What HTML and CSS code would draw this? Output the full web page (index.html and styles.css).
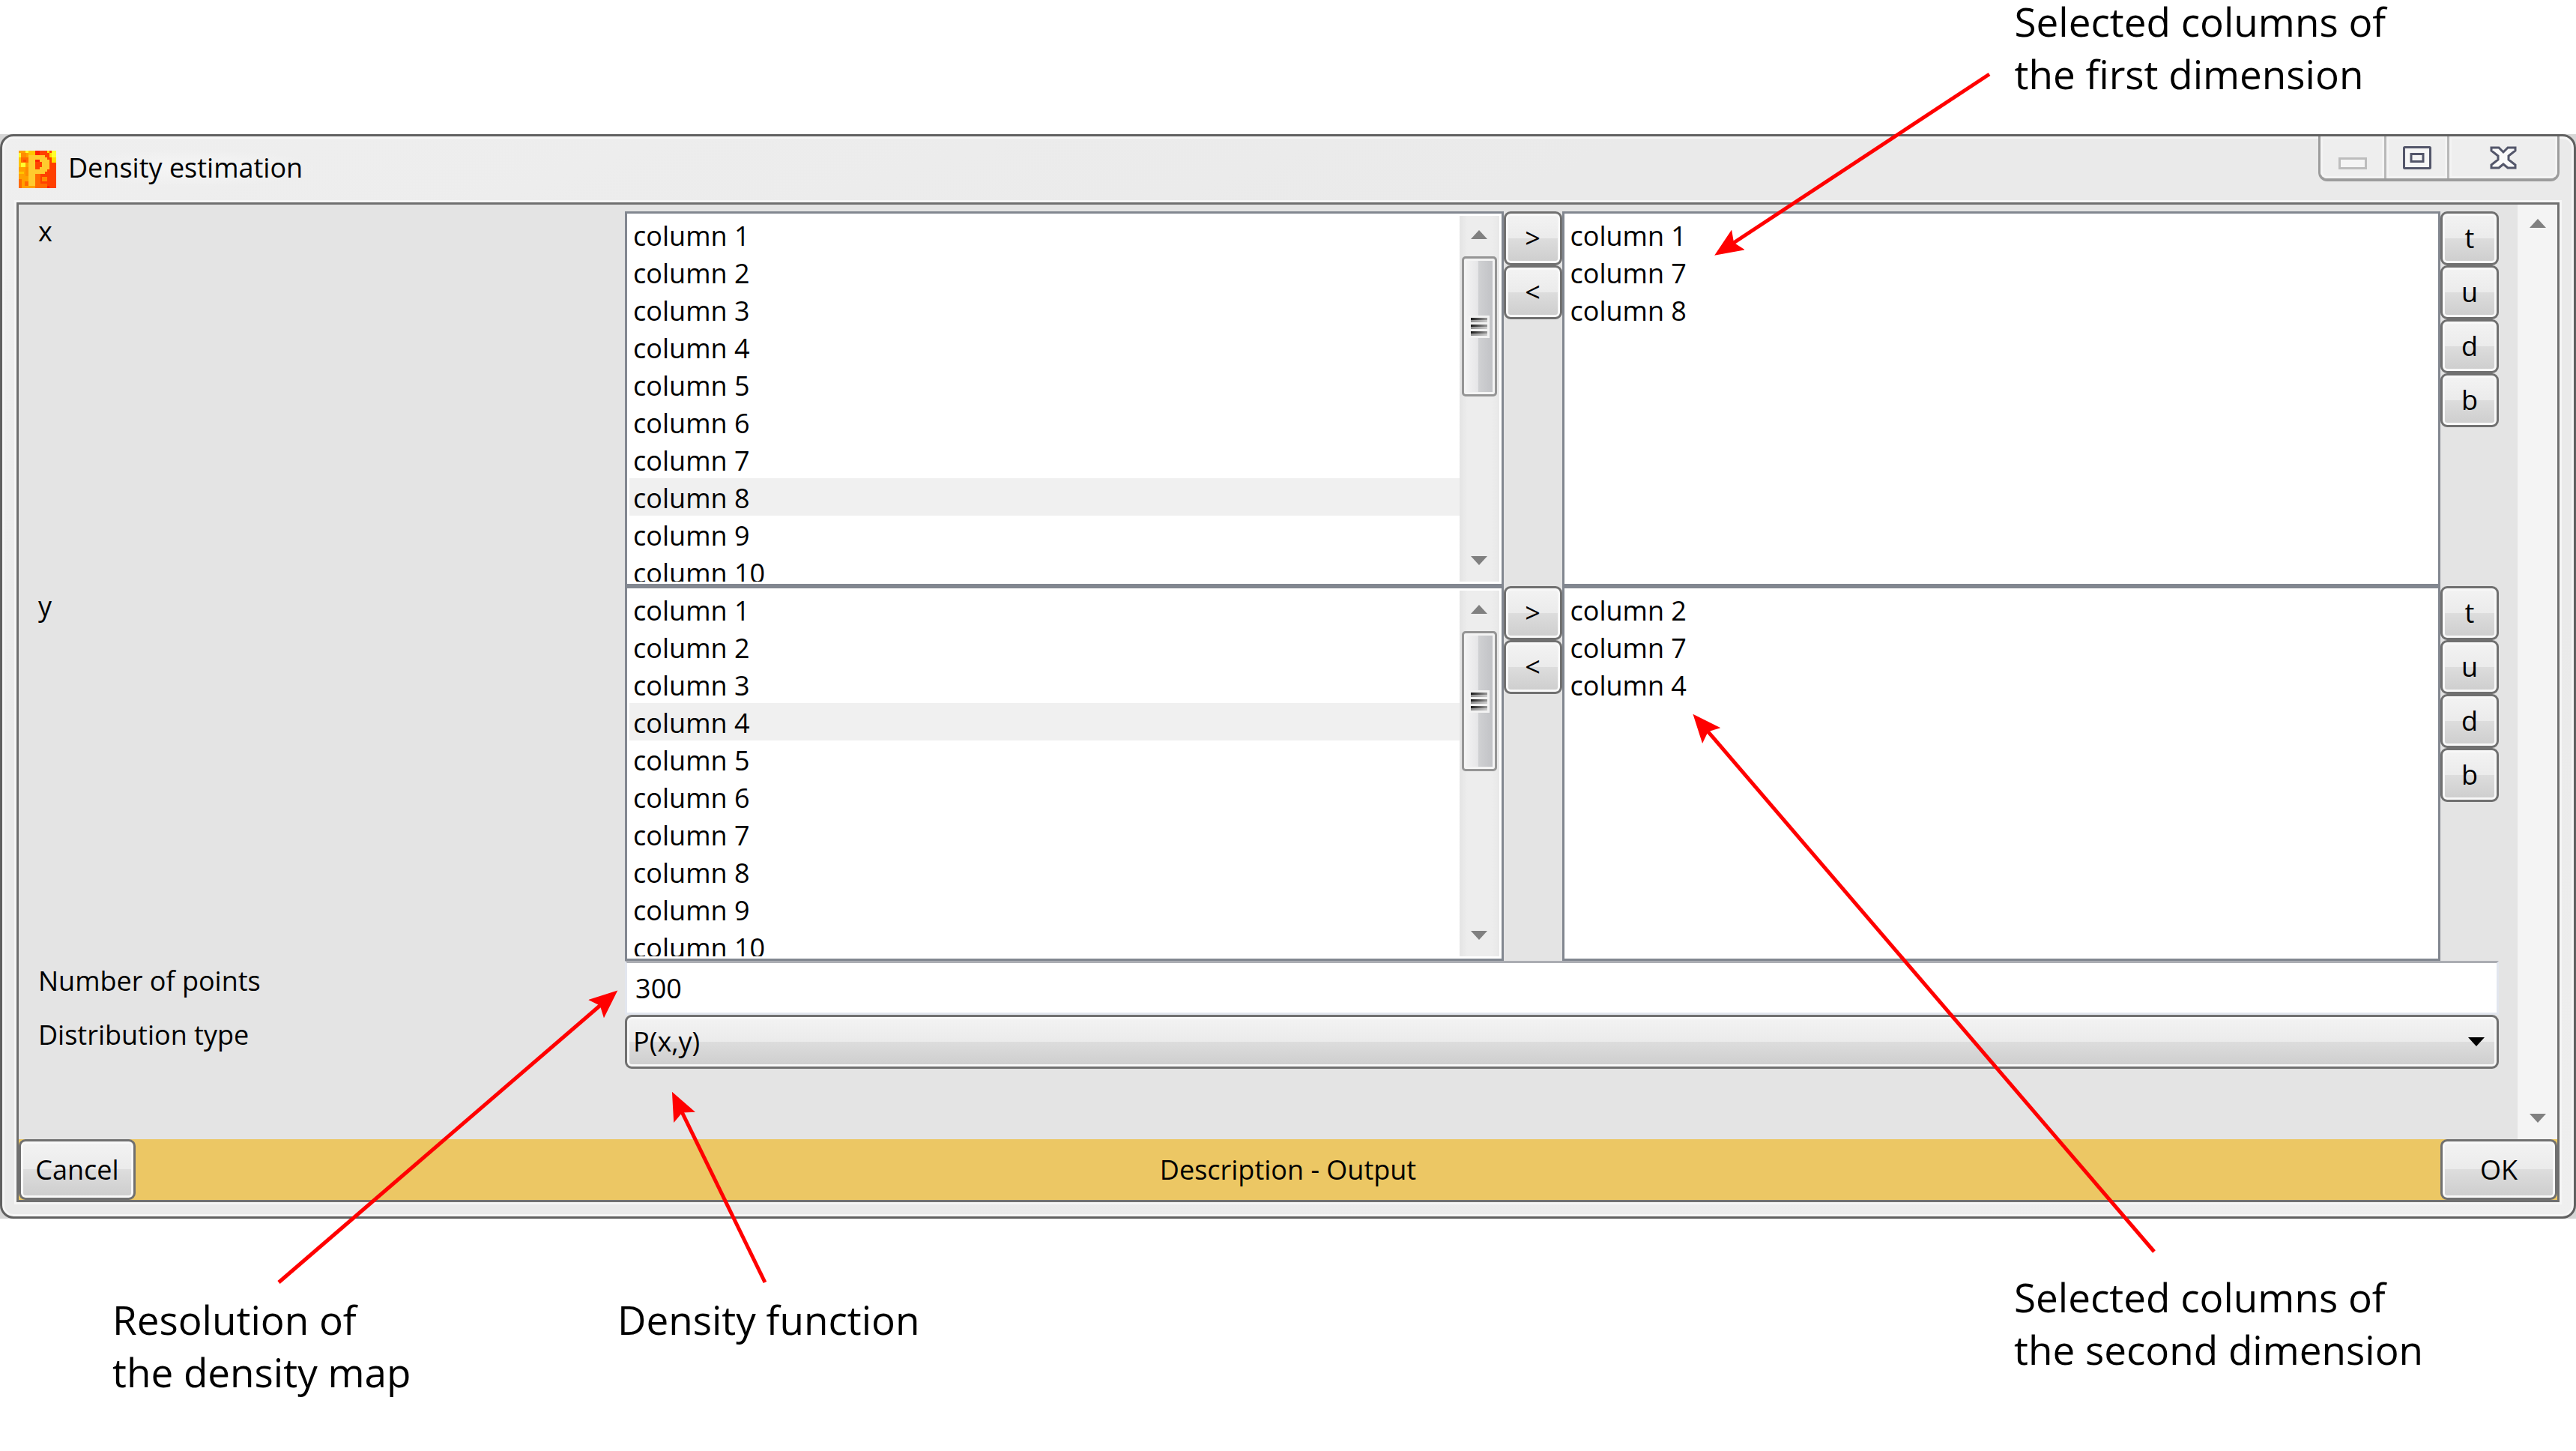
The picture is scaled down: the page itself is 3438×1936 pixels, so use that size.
FILE: index.html
```html
<!DOCTYPE html>
<html lang="en">
<head>
<meta charset="utf-8">
<title>Density estimation</title>
<link rel="stylesheet" href="styles.css">
</head>
<body>
<main class="figure">
  <header class="notes-top">
    <p class="note note-right">Selected columns of<br>the first dimension</p>
  </header>

  <div class="window-back">
  <section class="window" aria-labelledby="window-title">
    <div class="titlebar">
      <svg class="app-icon" viewBox="0 0 50 50" shape-rendering="crispEdges" aria-hidden="true">
        <rect width="50" height="50" fill="#ff4000"/>
        <path fill="#ffa000" d="M0 0H22V50H0z"/>
        <path fill="#ff6a00" d="M3 9H13V16H3zM0 38H4V50H0zM8 41H13V47H8zM22 27H29V50H22zM26 44H38V50H26z"/>
        <path fill="#ff8c00" d="M3 3H10V9H3zM31 35H38V41H31zM9 22H13V34H9z"/>
        <path fill="#ff4a00" d="M6 12H10V15H6z"/>
        <path fill="#ffc400" d="M0 6H3V22H0zM13 0H22V6H13zM0 28H7V31H0z"/>
        <path fill="#ffff30" d="M0 3H3V9H0zM3 16H9V22H3zM9 0H13V3H9zM44 0H50V16H47V9H44z"/>
        <path fill="#ffe000" d="M38 3H44V16H50V9H41V0H38z"/>
        <path fill="#ff2000" d="M22 0H28V6H22zM22 12H28V15H22zM38 47H41V50H38z"/>
        <path fill="#ffcb2e" fill-rule="evenodd" d="M13 6H35V9H38V12H41V25H38V28H35V31H22V47H13zM22 12V25H28V22H31V15H28V12z"/>
      </svg>
      <h1 class="title" id="window-title">Density estimation</h1>
      <div class="window-controls">
        <button class="wc wc-min" aria-label="Minimize" disabled>
          <svg width="38" height="16" viewBox="0 0 38 16"><rect x="1.5" y="1.5" width="35" height="13" fill="#f5f5f5" stroke="#bdbdbd" stroke-width="3"/></svg>
        </button>
        <button class="wc wc-max" aria-label="Maximize">
          <svg width="38" height="31" viewBox="0 0 38 31"><rect x="1.5" y="1.5" width="35" height="28" rx="1" fill="#f6f6f6" stroke="#53566a" stroke-width="3"/><rect x="11" y="10.5" width="16" height="10" fill="#f4f4f4" stroke="#53566a" stroke-width="3"/></svg>
        </button>
        <button class="wc wc-close" aria-label="Close">
          <svg width="36" height="31" viewBox="0 0 36 31"><path d="M2 2H12L18 8L24 2H34V6L25 13V18L34 25V29H24L18 24L12 29H2V25L11 18V13L2 6z" fill="#fafafa" stroke="#53566a" stroke-width="3"/></svg>
        </button>
      </div>
    </div>

    <div class="client">
      <div class="body">
        <form class="form" id="density">
          <div class="row">
            <span class="label" id="label-x">x</span>
            <div class="picker">
              <div class="listbox">
                <ul class="items" role="listbox" aria-labelledby="label-x">
                  <li role="option">column 1</li>
                  <li role="option">column 2</li>
                  <li role="option">column 3</li>
                  <li role="option">column 4</li>
                  <li role="option">column 5</li>
                  <li role="option">column 6</li>
                  <li role="option">column 7</li>
                  <li role="option" class="current" aria-selected="true">column 8</li>
                  <li role="option">column 9</li>
                  <li role="option">column 10</li>
                </ul>
                <div class="scrollbar">
                  <svg class="tri" viewBox="0 0 22 12"><path d="M11 0L22 12H0z"/></svg>
                  <div class="thumb"><i></i><i></i><i></i></div>
                  <svg class="tri" viewBox="0 0 22 12"><path d="M0 0H22L11 12z"/></svg>
                </div>
              </div>
              <div class="stack">
                <button type="button" class="btn">&gt;</button>
                <button type="button" class="btn">&lt;</button>
              </div>
              <div class="listbox">
                <ul class="items" role="listbox" aria-label="Selected columns for x">
                  <li role="option">column 1</li>
                  <li role="option">column 7</li>
                  <li role="option">column 8</li>
                </ul>
              </div>
              <div class="stack">
                <button type="button" class="btn">t</button>
                <button type="button" class="btn">u</button>
                <button type="button" class="btn">d</button>
                <button type="button" class="btn">b</button>
              </div>
            </div>
          </div>

          <div class="row">
            <span class="label" id="label-y">y</span>
            <div class="picker">
              <div class="listbox">
                <ul class="items" role="listbox" aria-labelledby="label-y">
                  <li role="option">column 1</li>
                  <li role="option">column 2</li>
                  <li role="option">column 3</li>
                  <li role="option" class="current" aria-selected="true">column 4</li>
                  <li role="option">column 5</li>
                  <li role="option">column 6</li>
                  <li role="option">column 7</li>
                  <li role="option">column 8</li>
                  <li role="option">column 9</li>
                  <li role="option">column 10</li>
                </ul>
                <div class="scrollbar">
                  <svg class="tri" viewBox="0 0 22 12"><path d="M11 0L22 12H0z"/></svg>
                  <div class="thumb"><i></i><i></i><i></i></div>
                  <svg class="tri" viewBox="0 0 22 12"><path d="M0 0H22L11 12z"/></svg>
                </div>
              </div>
              <div class="stack">
                <button type="button" class="btn">&gt;</button>
                <button type="button" class="btn">&lt;</button>
              </div>
              <div class="listbox">
                <ul class="items" role="listbox" aria-label="Selected columns for y">
                  <li role="option">column 2</li>
                  <li role="option">column 7</li>
                  <li role="option">column 4</li>
                </ul>
              </div>
              <div class="stack">
                <button type="button" class="btn">t</button>
                <button type="button" class="btn">u</button>
                <button type="button" class="btn">d</button>
                <button type="button" class="btn">b</button>
              </div>
            </div>
          </div>

          <div class="row">
            <label class="label" for="points">Number of points</label>
            <input class="text" id="points" type="text" value="300">
          </div>
          <div class="row">
            <label class="label" for="dist">Distribution type</label>
            <div class="combo">
              <select class="select" id="dist"><option>P(x,y)</option></select>
              <svg class="combo-arrow" viewBox="0 0 22 12" aria-hidden="true"><path d="M0 0H22L11 12z"/></svg>
            </div>
          </div>
        </form>
        <div class="page-scroll">
          <svg class="tri" viewBox="0 0 22 12"><path d="M11 0L22 12H0z"/></svg>
          <svg class="tri" viewBox="0 0 22 12"><path d="M0 0H22L11 12z"/></svg>
        </div>
      </div>
      <footer class="actions">
        <button type="button" class="btn btn-wide">Cancel</button>
        <span class="description">Description - Output</span>
        <button type="submit" form="density" class="btn btn-wide">OK</button>
      </footer>
    </div>
  </section>
  </div>

  <div class="notes-bottom">
    <p class="note note-left">Resolution of<br>the density map</p>
    <p class="note note-middle">Density function</p>
    <p class="note note-right">Selected columns of<br>the second dimension</p>
  </div>

  <svg class="arrows" viewBox="0 0 3438 1936" aria-hidden="true">
    <defs>
      <marker id="head" markerUnits="userSpaceOnUse" markerWidth="40" markerHeight="32" refX="31" refY="16" viewBox="0 0 40 32" orient="auto">
        <path d="M38 16L0 0L7 16L0 32z" fill="#f00"/>
      </marker>
    </defs>
    <g stroke="#f00" stroke-width="5">
      <path d="M2655 99L2294 337" marker-end="url(#head)"/>
      <path d="M372 1711L819 1326" marker-end="url(#head)"/>
      <path d="M1021 1711L900 1463" marker-end="url(#head)"/>
      <path d="M2875 1670L2264 958" marker-end="url(#head)"/>
    </g>
  </svg>
</main>
</body>
</html>
```
FILE: styles.css
```css
* { box-sizing: border-box; }

body {
  margin: 0;
  background: #fff;
  color: #000;
  font: 36px/50px "Open Sans", "Noto Sans", sans-serif;
}

button, input, select { font: inherit; color: inherit; margin: 0; }

.figure { position: relative; }

/* Annotations */
.note {
  margin: 0;
  font-size: 53px;
  line-height: 70px;
  white-space: nowrap;
}
.notes-top { display: flow-root; height: 179px; }
.notes-top .note { margin-top: -6px; }
.notes-bottom {
  display: grid;
  grid-template-columns: 674fr 1864fr 750fr;
  padding: 100px 0 100px 150px;
}
.note-right { padding-left: 78.2%; }
.notes-bottom .note-right { padding-left: 0; margin-top: -30px; }
.arrows {
  position: absolute;
  top: 0;
  left: 0;
  width: 100%;
  pointer-events: none;
}

/* Window frame */
.window-back { background: #d6d6d6; }
.window {
  border: 3px solid #606060;
  border-radius: 18px;
  background: linear-gradient(160deg, #efefef, #eaeaea 30%, #eaeaea 70%, #efefef);
  box-shadow: inset 0 0 0 3px #f6f6f6;
  padding: 0 19px 19px;
}
.titlebar {
  display: flex;
  align-items: flex-start;
  height: 88px;
  padding-left: 3px;
}
.app-icon { width: 50px; height: 50px; margin-top: 19px; }
.title {
  margin: 17px 0 0 16px;
  font-size: 36px;
  font-weight: 400;
  line-height: 50px;
  padding: 0 20px 0 0;
  background: radial-gradient(closest-side, #f6f6f6, #f6f6f600);
}
.window-controls {
  display: flex;
  margin-left: auto;
  height: 60px;
  border: 3px solid #9c9c9c;
  border-top: 0;
  border-bottom-width: 4px;
  border-radius: 0 0 12px 12px;
}
.wc {
  display: flex;
  justify-content: center;
  padding: 13px 0 0;
  border: 0;
  border-right: 3px solid #b8b8b8;
  background: #eee;
  box-shadow: inset 0 0 0 3px #f4f4f4;
}
.wc-min { width: 88px; padding-top: 28px; border-bottom-left-radius: 9px; }
.wc-max { width: 84px; }
.wc-close { width: 144px; border-right: 0; border-bottom-right-radius: 9px; }

.client {
  border: 3px solid #707070;
  outline: 3px solid #f6f6f6;
  background: #e4e4e4;
}
.body { display: flex; }

/* Form */
.form { flex: 1; padding: 9px 25px 94px 0; }
.row { display: grid; grid-template-columns: 11fr 34fr; }
.label { padding: 2px 0 0 26px; }
.picker {
  display: grid;
  grid-template-columns: 1fr 78px 1fr 78px;
  height: 500px;
}
.listbox {
  display: flex;
  min-height: 0;
  padding: 3px;
  border: 3px solid #828790;
  background: #fff;
}
.items {
  flex: 1;
  margin: 0;
  padding: 0;
  overflow: hidden;
  list-style: none;
}
.items li { height: 50px; padding-left: 5px; line-height: 54px; }
.items .current { background: #f0f0f0; }
.scrollbar {
  display: flex;
  flex-direction: column;
  align-items: center;
  width: 53px;
  padding: 19px 0 22px;
  background: linear-gradient(90deg, #e4e4e4, #ededed 20%, #ededed 80%, #e8e8e8);
}
.tri { display: block; width: 22px; height: 12px; fill: #808080; }
.thumb {
  display: flex;
  flex-direction: column;
  align-items: center;
  justify-content: center;
  gap: 3px;
  width: 47px;
  height: 187px;
  margin: 23px 0 auto;
  border: 3px solid #959595;
  border-radius: 5px;
  background: linear-gradient(90deg, #f4f4f4, #e6e6e8 45%, #d0d1d3 46%, #bfc0c4);
  box-shadow: inset 0 0 0 3px #f4f4f4;
}
.thumb i {
  width: 22px;
  height: 6px;
  background: linear-gradient(#0000 50%, #ffffff80 50%), linear-gradient(90deg, #1a1a1a, #999);
  box-shadow: 0 0 0 3px #f2f2f2;
}

.btn {
  height: 72px;
  padding: 0;
  border: 3px solid #707070;
  border-radius: 9px;
  background: linear-gradient(#f3f3f3, #ebebeb 50%, #dddddd 50%, #cdcdcd);
  box-shadow: inset 0 0 0 3px #f8f8f8;
}
.stack { display: flex; flex-direction: column; }
.text {
  width: 100%;
  height: 72px;
  padding: 0 11px;
  border: 3px solid #e2e6ee;
  border-top-color: #abadb3;
  background: #fff;
}
.combo { display: grid; align-items: center; }
.select {
  grid-area: 1 / 1;
  appearance: none;
  height: 72px;
  padding: 0 8px;
  border: 3px solid #707070;
  border-radius: 9px;
  background: linear-gradient(#f3f3f3, #ebebeb 50%, #dddddd 50%, #cdcdcd);
  box-shadow: inset 0 0 0 3px #f8f8f8;
}
.combo-arrow {
  grid-area: 1 / 1;
  justify-self: end;
  width: 22px;
  height: 12px;
  margin-right: 19px;
  pointer-events: none;
}

.page-scroll {
  display: flex;
  flex-direction: column;
  justify-content: space-between;
  align-items: center;
  width: 53px;
  padding: 19px 0 22px;
  background: #f4f4f4;
}

.actions {
  display: flex;
  align-items: stretch;
  justify-content: space-between;
  height: 81px;
  background: #ecc764;
}
.actions .btn { height: auto; }
.btn-wide { width: 156px; }
.description { align-self: center; }
```
